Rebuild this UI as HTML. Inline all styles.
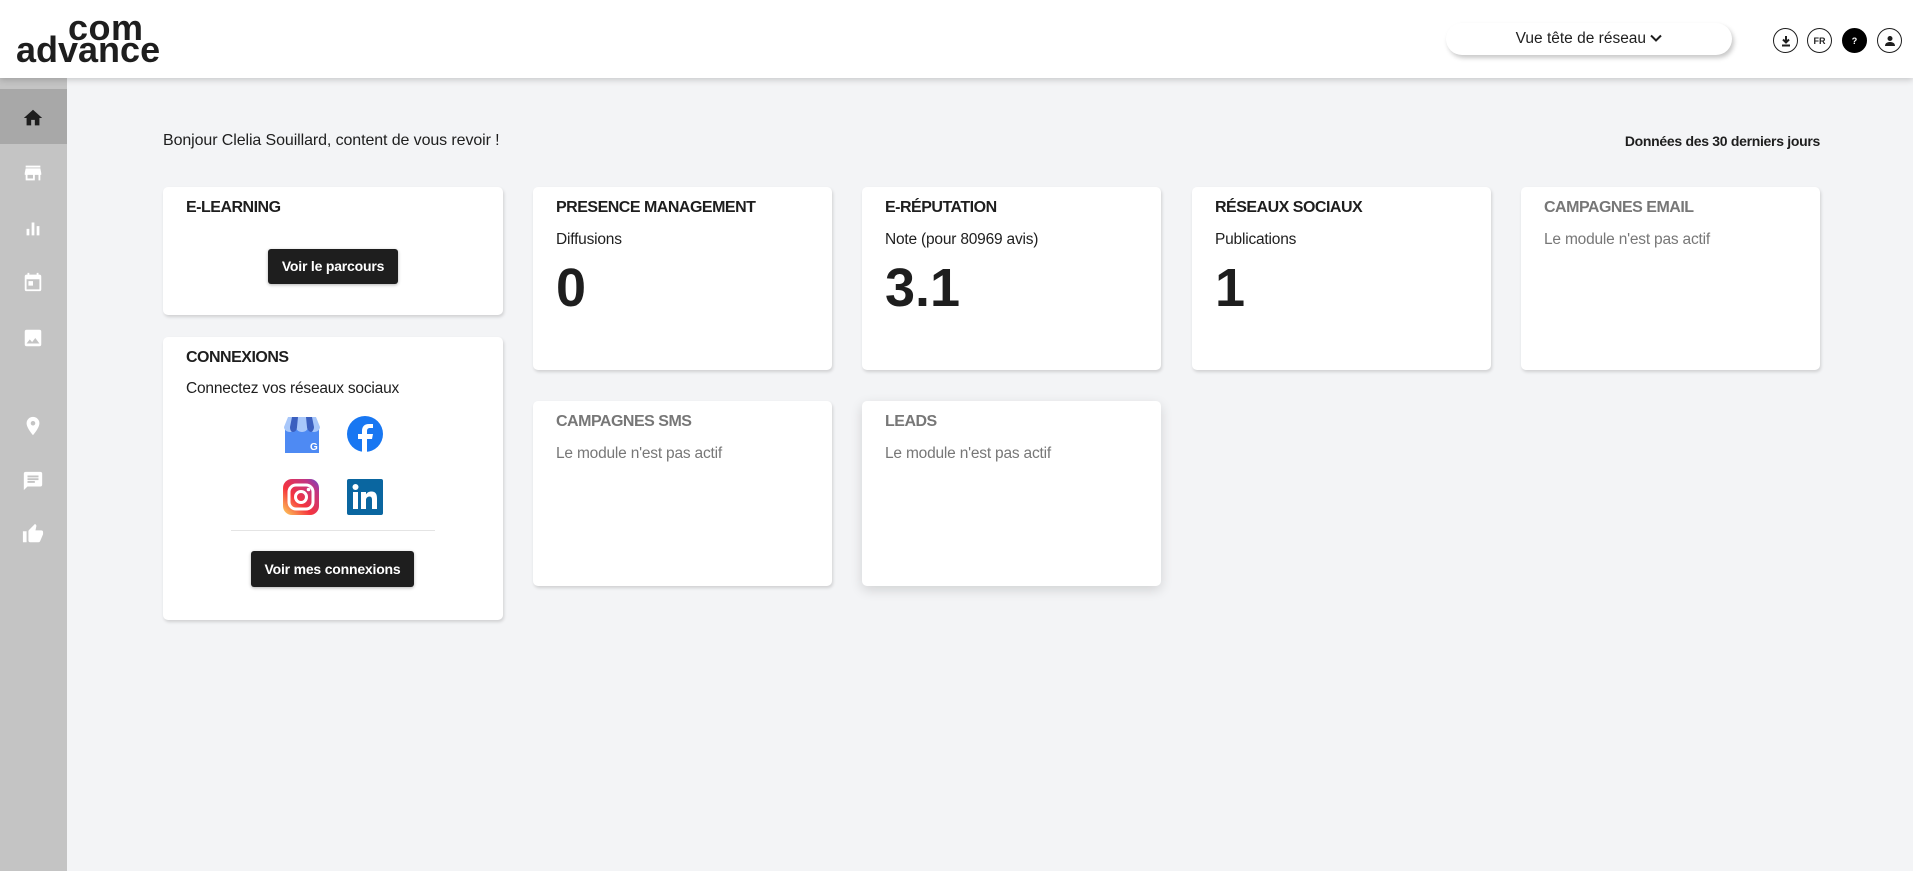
<!DOCTYPE html>
<html><head><meta charset="utf-8">
<style>
*{box-sizing:border-box;margin:0;padding:0}
body{width:1913px;height:871px;overflow:hidden;background:#f3f4f6;font-family:"Liberation Sans",sans-serif;color:#1e1e1e;position:relative}
.hdr{position:absolute;left:0;top:0;width:1913px;height:78px;background:#fff;box-shadow:0 2px 6px rgba(0,0,0,.18);z-index:3}
.logo{position:absolute;font-weight:bold;color:#1e1e1e;line-height:1}
.side{position:absolute;left:0;top:78px;width:67px;height:793px;background:#c4c4c4}
.side .act{position:absolute;left:0;top:11px;width:67px;height:55px;background:#a8a8a8}
.ic{position:absolute;left:22px;width:22px;height:22px}
.card{position:absolute;background:#fff;border-radius:5px;box-shadow:1px 2px 3px rgba(0,0,0,.15)}
.t{position:absolute;left:23px;top:12px;font-size:16px;font-weight:bold;letter-spacing:-.5px}
.s{position:absolute;left:23px;top:44px;font-size:15.5px;letter-spacing:-.2px}
.n{position:absolute;left:23px;top:70px;font-size:54px;font-weight:bold}
.g{color:#777}
.btn{position:absolute;background:#1e1e1e;color:#fff;font-weight:bold;font-size:14px;border-radius:3px;text-align:center;box-shadow:0 1px 3px rgba(0,0,0,.3);letter-spacing:-.2px}
.circ{position:absolute;top:28px;width:25px;height:25px;border:1.5px solid #1e1e1e;border-radius:50%;font-size:9px;font-weight:bold;display:flex;align-items:center;justify-content:center}
</style></head><body>
<div class="hdr">
 <div class="logo" style="left:68px;top:10px;font-size:36px;letter-spacing:.5px">com</div>
 <div class="logo" style="left:16px;top:32px;font-size:36px;letter-spacing:0">advance</div>
 <div style="position:absolute;left:1446px;top:23px;width:286px;height:32px;border-radius:16px;background:#fff;box-shadow:2px 3px 5px rgba(0,0,0,.22);font-size:15.5px;text-align:center;line-height:31px">Vue tête de réseau <svg width="12" height="8" viewBox="0 0 12 8" style="vertical-align:1px"><path d="M1 1.5l5 5 5-5" stroke="#1e1e1e" stroke-width="2" fill="none"/></svg></div>
 <div class="circ" style="left:1773px"><svg width="12" height="12" viewBox="0 0 12 12"><path d="M6 1v6M3 4.5l3 3 3-3" stroke="#1e1e1e" stroke-width="2" fill="none"/><path d="M2 10.5h8" stroke="#1e1e1e" stroke-width="2"/></svg></div>
 <div class="circ" style="left:1807px">FR</div>
 <div class="circ" style="left:1842px;background:#000;color:#fff;border-color:#000">?</div>
 <div class="circ" style="left:1877px"><svg width="12" height="12" viewBox="0 0 12 12"><circle cx="6" cy="3.5" r="2.5" fill="#1e1e1e"/><path d="M1 11c0-3 2.5-4 5-4s5 1 5 4z" fill="#1e1e1e"/></svg></div>
</div>
<div class="side">
 <div class="act"></div>
 <svg class="ic" style="top:29px" viewBox="0 0 24 24"><path d="M10 20v-6h4v6h5v-8h3L12 3 2 12h3v8z" fill="#1e1e1e"/></svg>
 <svg class="ic" style="top:84px" viewBox="0 0 24 24"><path d="M20 4H4v2h16zm1 10v-2l-1-5H4l-1 5v2h1v6h10v-6h4v6h2v-6zm-9 4H6v-4h6z" fill="#fff"/></svg>
 <svg class="ic" style="top:139px" viewBox="0 0 24 24"><path d="M5 13h3v7H5zM10.5 6h3v14h-3zM16 10h3v10h-3z" fill="#fff"/></svg>
 <svg class="ic" style="top:193px" viewBox="0 0 24 24"><path d="M19 4h-1V2h-2v2H8V2H6v2H5a2 2 0 00-2 2v14a2 2 0 002 2h14a2 2 0 002-2V6a2 2 0 00-2-2zm0 16H5V9h14zM7 11h5v5H7z" fill="#fff"/></svg>
 <svg class="ic" style="top:249px" viewBox="0 0 24 24"><path d="M21 19V5a2 2 0 00-2-2H5a2 2 0 00-2 2v14a2 2 0 002 2h14a2 2 0 002-2zM8.5 13.5l2.5 3 3.5-4.5 4.5 6H5z" fill="#fff"/></svg>
 <svg class="ic" style="top:337px" viewBox="0 0 24 24"><path d="M12 2a7 7 0 00-7 7c0 5.3 7 13 7 13s7-7.7 7-13a7 7 0 00-7-7zm0 9.5A2.5 2.5 0 1112 6.5a2.5 2.5 0 010 5z" fill="#fff"/></svg>
 <svg class="ic" style="top:392px" viewBox="0 0 24 24"><path d="M20 2H4a2 2 0 00-2 2v18l4-4h14a2 2 0 002-2V4a2 2 0 00-2-2zM6 9h12v2H6zm8 5H6v-2h8zm4-6H6V6h12z" fill="#fff"/></svg>
 <svg class="ic" style="top:445px" viewBox="0 0 24 24"><path d="M1 21h4V9H1zm22-11a2 2 0 00-2-2h-6.3l1-4.6v-.3a1.5 1.5 0 00-.4-1L14.2 1 7.6 7.6A2 2 0 007 9v10a2 2 0 002 2h9a2 2 0 001.8-1.2l3-7.1a2 2 0 00.2-.7z" fill="#fff"/></svg>
</div>
<div style="position:absolute;left:163px;top:132px;font-size:16px;letter-spacing:-.1px">Bonjour Clelia Souillard, content de vous revoir !</div>
<div style="position:absolute;right:93px;top:133px;font-size:14px;font-weight:bold;letter-spacing:-.3px">Données des 30 derniers jours</div>

<div class="card" style="left:163px;top:187px;width:340px;height:128px"><div class="t">E-LEARNING</div>
 <div class="btn" style="left:105px;top:62px;width:130px;height:35px;line-height:35px">Voir le parcours</div></div>
<div class="card" style="left:163px;top:337px;width:340px;height:283px"><div class="t">CONNEXIONS</div><div class="s" style="top:43px">Connectez vos réseaux sociaux</div>
 <svg style="position:absolute;left:119px;top:78px" width="40" height="40" viewBox="0 0 40 40"><path d="M3 12h34v26H3z" fill="#4e8af3"/><path d="M2 12L6 2h28l4 10c0 3-3 5-6 5s-6-2-6-5c0 3-3 5-6 5s-6-2-6-5c0 3-3 5-6 5s-6-2-6-5z" fill="#a8c7fa"/><path d="M10 2h6l-1 10c0 3-2 5-4 5s-3-2-3-5zM24 2h6l2 10c0 3-2 5-3 5s-4-2-4-5z" fill="#3b5fbf"/><text x="28" y="35" font-size="10" font-weight="bold" fill="#fff" font-family="Liberation Sans">G</text></svg>
 <svg style="position:absolute;left:183px;top:78px" width="38" height="38" viewBox="0 0 38 38"><circle cx="19" cy="19" r="18" fill="#1877f2"/><path d="M21 37V24h5l1-5h-6v-3c0-2 1-3 3-3h3V9h-4c-5 0-7 3-7 7v3h-4v5h4v13z" fill="#fff"/></svg>
 <svg style="position:absolute;left:119px;top:141px" width="38" height="38" viewBox="0 0 38 38"><defs><linearGradient id="ig" x1="0" y1="1" x2="1" y2="0"><stop offset="0" stop-color="#fdd35b"/><stop offset=".4" stop-color="#f5343d"/><stop offset=".8" stop-color="#c13584"/><stop offset="1" stop-color="#6a49cc"/></linearGradient></defs><rect x="1" y="1" width="36" height="36" rx="9" fill="url(#ig)"/><rect x="7" y="7" width="24" height="24" rx="7" fill="none" stroke="#fff" stroke-width="3"/><circle cx="19" cy="19" r="5.5" fill="none" stroke="#fff" stroke-width="3"/><circle cx="26.5" cy="11.5" r="1.8" fill="#fff"/></svg>
 <svg style="position:absolute;left:183px;top:141px" width="38" height="38" viewBox="0 0 38 38"><rect x="1" y="1" width="36" height="36" rx="2" fill="#0a66a0"/><path d="M7 14h5v17H7z" fill="#fff"/><circle cx="9.5" cy="9" r="3" fill="#fff"/><path d="M15 14h5v2.5c1-2 3-3 5.5-3 4 0 5.5 2.5 5.5 7V31h-5v-9c0-2-.5-3.5-2.5-3.5S20 20 20 22v9h-5z" fill="#fff"/></svg>
 <div style="position:absolute;left:68px;top:193px;width:204px;height:1px;background:#e4e4e4"></div>
 <div class="btn" style="left:88px;top:214px;width:163px;height:36px;line-height:36px">Voir mes connexions</div></div>

<div class="card" style="left:533px;top:187px;width:299px;height:183px"><div class="t">PRESENCE MANAGEMENT</div><div class="s">Diffusions</div><div class="n">0</div></div>
<div class="card" style="left:862px;top:187px;width:299px;height:183px"><div class="t">E-RÉPUTATION</div><div class="s">Note (pour 80969 avis)</div><div class="n">3.1</div></div>
<div class="card" style="left:1192px;top:187px;width:299px;height:183px"><div class="t">RÉSEAUX SOCIAUX</div><div class="s">Publications</div><div class="n">1</div></div>
<div class="card" style="left:1521px;top:187px;width:299px;height:183px"><div class="t g">CAMPAGNES EMAIL</div><div class="s g">Le module n'est pas actif</div></div>
<div class="card" style="left:533px;top:401px;width:299px;height:185px"><div class="t g">CAMPAGNES SMS</div><div class="s g">Le module n'est pas actif</div></div>
<div class="card" style="left:862px;top:401px;width:299px;height:185px;box-shadow:0 4px 12px rgba(0,0,0,.14)"><div class="t g">LEADS</div><div class="s g">Le module n'est pas actif</div></div>
</body></html>
